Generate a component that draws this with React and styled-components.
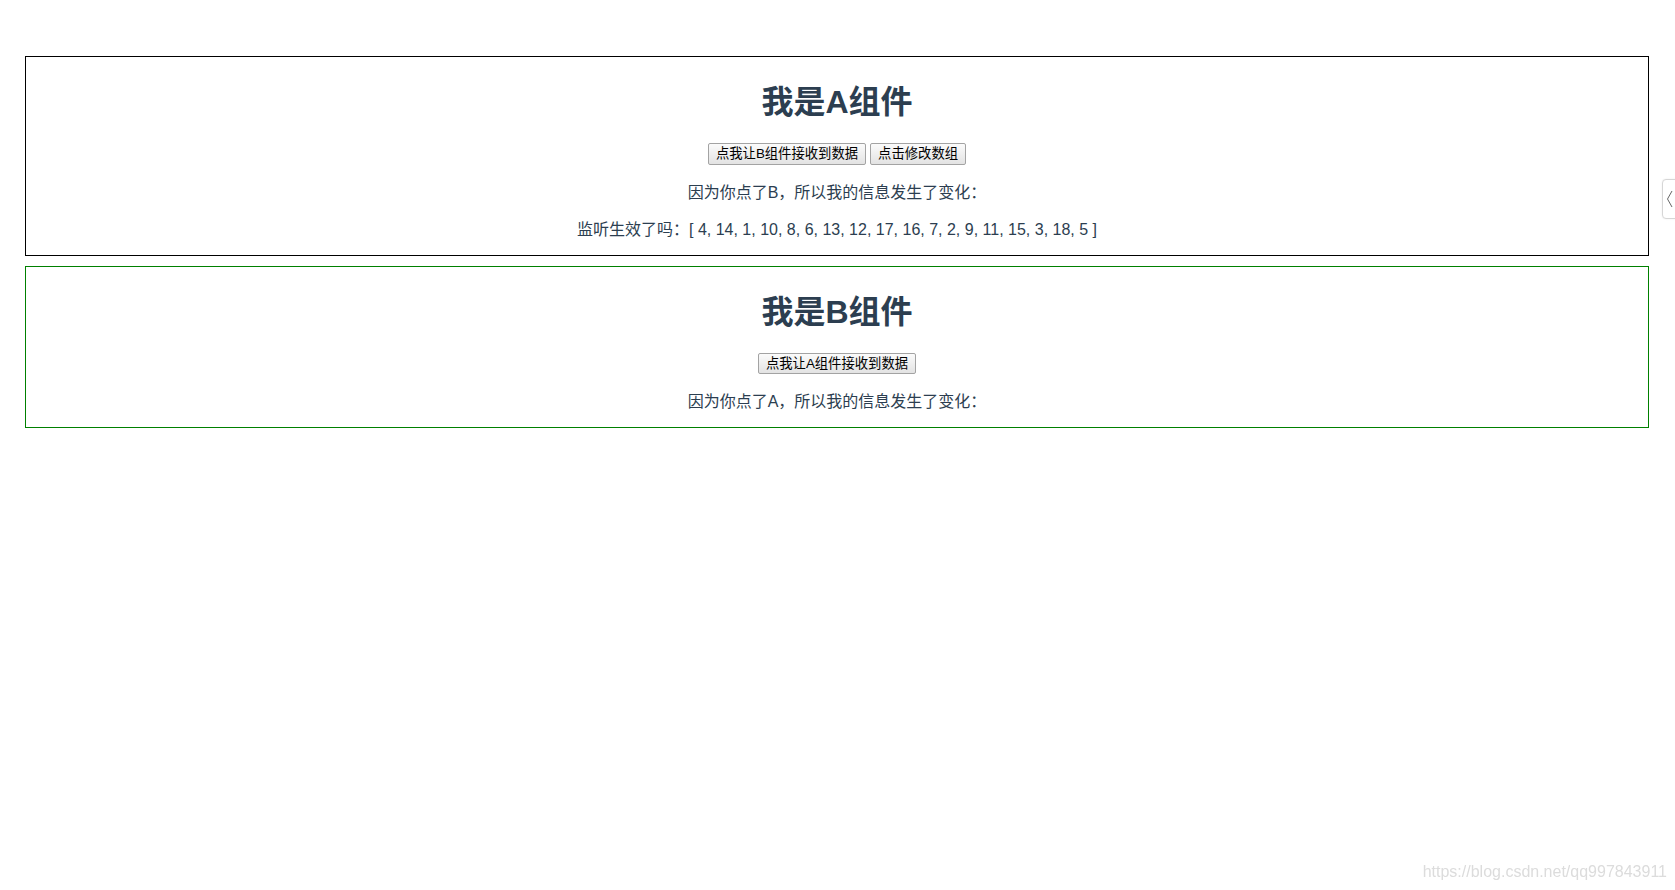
import React from "react";
import styled, { createGlobalStyle } from "styled-components";

const GlobalStyle = createGlobalStyle`
  html, body {
    margin: 0;
    padding: 0;
    background: #ffffff;
  }
  body {
    font-family: "Liberation Sans", Arial, "Noto Sans CJK SC", sans-serif;
    color: #2c3e50;
    -webkit-font-smoothing: antialiased;
  }
`;

const Page = styled.div`
  padding: 56px 26px 0 25px;
  text-align: center;
`;

const Panel = styled.section`
  border: 1px solid ${(p) => p.$color};
  text-align: center;
  & + & {
    margin-top: 10px;
  }
`;

const Title = styled.h1`
  font-size: 32px;
  font-weight: 700;
  line-height: 42px;
  margin: 24px 0 20px;
  color: #2c3e50;
`;

const ButtonRow = styled.div`
  display: flex;
  justify-content: center;
  align-items: flex-start;
  gap: 4px;
  height: 22.5px;
`;

const Button = styled.button`
  font-family: "Liberation Sans", Arial, "Noto Sans CJK SC", sans-serif;
  font-size: 13.33px;
  line-height: 17.6px;
  height: 21.6px;
  padding: 1px 7px;
  color: #000;
  background: linear-gradient(#fbfbfb, #e3e3e3);
  border: 1px solid #a3a3a3;
  border-radius: 2px;
  cursor: pointer;
  box-sizing: border-box;
`;

const Line = styled.p`
  margin: 16px 0;
  font-size: 16px;
  line-height: 21px;
  color: #2c3e50;
  &:last-child {
    margin-bottom: 15px;
  }
`;

const SideTab = styled.div`
  position: fixed;
  top: 179px;
  right: -8px;
  width: 21px;
  height: 40px;
  border: 1px solid #d6d6d6;
  border-radius: 4px;
  background: #fff;
  box-shadow: 0 0 2px rgba(0, 0, 0, 0.08);
  display: flex;
  align-items: center;
  padding-left: 3px;
  box-sizing: border-box;
`;

const Watermark = styled.div`
  position: fixed;
  right: 8px;
  bottom: 9px;
  font-family: "Liberation Sans", Arial, sans-serif;
  font-size: 16px;
  line-height: 18px;
  color: #dcdcdc;
`;

const numbers = [4, 14, 1, 10, 8, 6, 13, 12, 17, 16, 7, 2, 9, 11, 15, 3, 18, 5];

export default function App() {
  return (
    <>
      <GlobalStyle />
      <Page>
        <Panel $color="#000">
          <Title>我是A组件</Title>
          <ButtonRow>
            <Button>点我让B组件接收到数据</Button>
            <Button>点击修改数组</Button>
          </ButtonRow>
          <Line>因为你点了B，所以我的信息发生了变化：</Line>
          <Line>监听生效了吗：[ {numbers.join(", ")} ]</Line>
        </Panel>
        <Panel $color="#008000">
          <Title>我是B组件</Title>
          <ButtonRow>
            <Button>点我让A组件接收到数据</Button>
          </ButtonRow>
          <Line>因为你点了A，所以我的信息发生了变化：</Line>
        </Panel>
      </Page>
      <SideTab>
        <svg width="7" height="18" viewBox="0 0 7 18" fill="none">
          <polyline points="6,1 1.5,9 6,17" stroke="#666" strokeWidth="1" />
        </svg>
      </SideTab>
      <Watermark>https://blog.csdn.net/qq997843911</Watermark>
    </>
  );
}
